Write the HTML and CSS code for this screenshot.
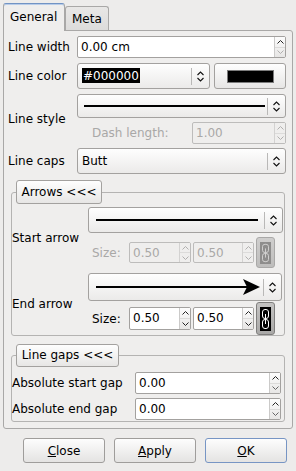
FILE: index.html
```html
<!DOCTYPE html>
<html lang="en">
<head>
	<meta charset="UTF-8">
	<title>Line properties</title>
<link rel="stylesheet" href="styles.css">
</head>
<body>
	<div class="tabs">
		<div class="tab tab-current">General</div>
		<div class="tab tab-meta">Meta</div>
	</div>

	<div class="pane">
		<div class="row">
			<span class="lbl">Line width</span>
			<div class="spin spin-wide">
				<span class="spin-text">0.00 cm</span>
				<span class="spin-btns">
					<span><svg width="7" height="4" viewBox="0 0 7 4"><path d="M0.5 3.5 3.5 0.5 6.5 3.5" fill="none" stroke="#222"/></svg></span>
					<span><svg width="7" height="4" viewBox="0 0 7 4"><path d="M0.5 0.5 3.5 3.5 6.5 0.5" fill="none" stroke="#b0afae"/></svg></span>
				</span>
			</div>
		</div>

		<div class="row row-color">
			<span class="lbl">Line color</span>
			<div class="combo combo-color">
				<span class="combo-text"><span class="selected">#000000</span></span>
				<span class="combo-arrow"><svg width="7" height="11" viewBox="0 0 7 11"><path d="M0.5 4 3.5 1 6.5 4 M0.5 7 3.5 10 6.5 7" fill="none" stroke="#111" stroke-width="1.1"/></svg></span>
			</div>
			<div class="colorbtn"><span class="swatch"></span></div>
		</div>

		<div class="row row-style">
			<span class="lbl">Line style</span>
			<div class="col">
				<div class="combo combo-style">
					<span class="combo-line line-style"></span>
					<span class="combo-arrow"><svg width="7" height="11" viewBox="0 0 7 11"><path d="M0.5 4 3.5 1 6.5 4 M0.5 7 3.5 10 6.5 7" fill="none" stroke="#111" stroke-width="1.1"/></svg></span>
				</div>
				<div class="dash-row">
					<span class="dash-lbl">Dash length:</span>
					<div class="spin spin-dash spin-off">
						<span class="spin-text">1.00</span>
						<span class="spin-btns">
							<span><svg width="7" height="4" viewBox="0 0 7 4"><path d="M0.5 3.5 3.5 0.5 6.5 3.5" fill="none" stroke="#b0afae"/></svg></span>
							<span><svg width="7" height="4" viewBox="0 0 7 4"><path d="M0.5 0.5 3.5 3.5 6.5 0.5" fill="none" stroke="#b0afae"/></svg></span>
						</span>
					</div>
				</div>
			</div>
		</div>

		<div class="row row-caps">
			<span class="lbl">Line caps</span>
			<div class="combo combo-caps">
				<span class="combo-text">Butt</span>
				<span class="combo-arrow"><svg width="7" height="11" viewBox="0 0 7 11"><path d="M0.5 4 3.5 1 6.5 4 M0.5 7 3.5 10 6.5 7" fill="none" stroke="#111" stroke-width="1.1"/></svg></span>
			</div>
		</div>

		<fieldset class="group group-arrows">
			<legend class="legend-btn legend-arrows"><span>Arrows &lt;&lt;&lt;</span></legend>

			<div class="row">
				<span class="lbl-arrow">Start arrow</span>
				<div class="col">
					<div class="combo combo-start">
						<span class="combo-line line-start"></span>
						<span class="combo-arrow"><svg width="7" height="11" viewBox="0 0 7 11"><path d="M0.5 4 3.5 1 6.5 4 M0.5 7 3.5 10 6.5 7" fill="none" stroke="#111" stroke-width="1.1"/></svg></span>
					</div>
					<div class="size-row size-start">
						<span class="size-lbl off">Size:</span>
						<div class="spin spin-size spin-off">
							<span class="spin-text">0.50</span>
							<span class="spin-btns">
								<span><svg width="7" height="4" viewBox="0 0 7 4"><path d="M0.5 3.5 3.5 0.5 6.5 3.5" fill="none" stroke="#b0afae"/></svg></span>
								<span><svg width="7" height="4" viewBox="0 0 7 4"><path d="M0.5 0.5 3.5 3.5 6.5 0.5" fill="none" stroke="#b0afae"/></svg></span>
							</span>
						</div>
						<div class="spin spin-size spin-off">
							<span class="spin-text">0.50</span>
							<span class="spin-btns">
								<span><svg width="7" height="4" viewBox="0 0 7 4"><path d="M0.5 3.5 3.5 0.5 6.5 3.5" fill="none" stroke="#b0afae"/></svg></span>
								<span><svg width="7" height="4" viewBox="0 0 7 4"><path d="M0.5 0.5 3.5 3.5 6.5 0.5" fill="none" stroke="#b0afae"/></svg></span>
							</span>
						</div>
						<div class="link link-off">
							<svg viewBox="0 0 11 24" preserveAspectRatio="none"><rect width="11" height="24" fill="#8e8d8c"/><rect x="2.5" y="2.5" width="6" height="9" rx="2.5" fill="none" stroke="#d2d1d0"/><rect x="2.5" y="12.5" width="6" height="9" rx="2.5" fill="none" stroke="#d2d1d0"/><path d="M5.5 7v10" stroke="#d2d1d0"/></svg>
						</div>
					</div>
				</div>
			</div>

			<div class="row row-end">
				<span class="lbl-arrow">End arrow</span>
				<div class="col">
					<div class="combo combo-end">
						<span class="combo-line line-end"></span>
						<svg class="head" width="17" height="16" viewBox="0 0 17 16"><path d="M0 0 17 8 0 16 4 8Z" fill="#000"/></svg>
						<span class="combo-arrow"><svg width="7" height="11" viewBox="0 0 7 11"><path d="M0.5 4 3.5 1 6.5 4 M0.5 7 3.5 10 6.5 7" fill="none" stroke="#111" stroke-width="1.1"/></svg></span>
					</div>
					<div class="size-row size-end">
						<span class="size-lbl">Size:</span>
						<div class="spin spin-size">
							<span class="spin-text">0.50</span>
							<span class="spin-btns">
								<span><svg width="7" height="4" viewBox="0 0 7 4"><path d="M0.5 3.5 3.5 0.5 6.5 3.5" fill="none" stroke="#222"/></svg></span>
								<span><svg width="7" height="4" viewBox="0 0 7 4"><path d="M0.5 0.5 3.5 3.5 6.5 0.5" fill="none" stroke="#222"/></svg></span>
							</span>
						</div>
						<div class="spin spin-size">
							<span class="spin-text">0.50</span>
							<span class="spin-btns">
								<span><svg width="7" height="4" viewBox="0 0 7 4"><path d="M0.5 3.5 3.5 0.5 6.5 3.5" fill="none" stroke="#222"/></svg></span>
								<span><svg width="7" height="4" viewBox="0 0 7 4"><path d="M0.5 0.5 3.5 3.5 6.5 0.5" fill="none" stroke="#222"/></svg></span>
							</span>
						</div>
						<div class="link">
							<svg viewBox="0 0 11 24" preserveAspectRatio="none"><rect width="11" height="24" fill="#000"/><rect x="2.5" y="2.5" width="6" height="9" rx="2.5" fill="none" stroke="#fff"/><rect x="2.5" y="12.5" width="6" height="9" rx="2.5" fill="none" stroke="#fff"/><path d="M5.5 7v10" stroke="#fff"/></svg>
						</div>
					</div>
				</div>
			</div>
		</fieldset>

		<fieldset class="group group-gaps">
			<legend class="legend-btn legend-gaps"><span>Line gaps &lt;&lt;&lt;</span></legend>

			<div class="row">
				<span class="lbl-gap">Absolute start gap</span>
				<div class="spin spin-gap">
					<span class="spin-text">0.00</span>
					<span class="spin-btns">
						<span><svg width="7" height="4" viewBox="0 0 7 4"><path d="M0.5 3.5 3.5 0.5 6.5 3.5" fill="none" stroke="#222"/></svg></span>
						<span><svg width="7" height="4" viewBox="0 0 7 4"><path d="M0.5 0.5 3.5 3.5 6.5 0.5" fill="none" stroke="#666"/></svg></span>
					</span>
				</div>
			</div>
			<div class="row row-gap2">
				<span class="lbl-gap">Absolute end gap</span>
				<div class="spin spin-gap">
					<span class="spin-text">0.00</span>
					<span class="spin-btns">
						<span><svg width="7" height="4" viewBox="0 0 7 4"><path d="M0.5 3.5 3.5 0.5 6.5 3.5" fill="none" stroke="#222"/></svg></span>
						<span><svg width="7" height="4" viewBox="0 0 7 4"><path d="M0.5 0.5 3.5 3.5 6.5 0.5" fill="none" stroke="#666"/></svg></span>
					</span>
				</div>
			</div>
		</fieldset>
	</div>

	<div class="actions">
		<button class="btn"><u>C</u>lose</button>
		<button class="btn"><u>A</u>pply</button>
		<button class="btn btn-default"><u>O</u>K</button>
	</div>
</body>
</html>
```

FILE: styles.css
```css
* {
    box-sizing: border-box;
}
body {
    margin: 0;
    width: 296px;
    height: 471px;
    overflow: hidden;
    background-color: #edeceb;
    font-family: "DejaVu Sans", Verdana, sans-serif;
    font-size: 12px;
    color: #000;
}

/* tabs */
.tabs {
    display: flex;
    align-items: flex-end;
    height: 27px;
    margin: 3px 0 0 3px;
}
.tab {
    height: 24px;
    padding: 0 6px;
    line-height: 24px;
    border: 1px solid #a9a8a7;
    border-bottom: none;
    border-radius: 3px 3px 0 0;
    background: linear-gradient(#e8e7e6, #dddcdb);
}
.tab-current {
    position: relative;
    width: 62px;
    height: 28px;
    margin-bottom: -1px;
    line-height: 27px;
    border-top-color: #7193c4;
    background: #efeeed;
    box-shadow: inset 0 1px #b8cce8;
}
.tab-meta {
    width: 44px;
}

.pane {
    width: 290px;
    padding: 5px 6px 6px 4px;
    margin-left: 3px;
    border: 1px solid #a9a8a7;
    border-radius: 0 3px 3px 3px;
    background: #efeeed;
}

/* rows */
.row {
    display: flex;
    align-items: center;
}
.row-color, .row-style {
    margin-top: 5px;
}
.row-caps {
    margin-top: 4px;
}
.lbl {
    flex: none;
    width: 69px;
}
.col {
    display: flex;
    flex-direction: column;
}

/* spin boxes */
.spin {
    display: flex;
    height: 22px;
    border: 1px solid #a3a19f;
    border-radius: 2px;
    background: #fff;
}
.spin-text {
    flex: 1;
    padding-left: 3px;
    line-height: 20px;
    white-space: nowrap;
}
.spin-btns {
    display: flex;
    flex-direction: column;
    width: 11px;
    border-left: 1px solid #cbcac9;
    background: linear-gradient(#fcfcfc, #e7e6e5);
}
.spin-btns span {
    flex: 1;
    display: flex;
    align-items: center;
    justify-content: center;
}
.spin-btns span + span {
    border-top: 1px solid #dcdbda;
}
.spin-btns svg {
    display: block;
}
.spin-off {
    border-color: #bdbcbb;
    background: #efeeed;
    color: #a9a8a7;
}
.spin-off .spin-btns {
    background: #efeeed;
    border-left-color: #d3d2d1;
}
.spin-wide {
    width: 209px;
}

/* combo boxes */
.combo {
    display: flex;
    align-items: center;
    height: 26px;
    border: 1px solid #a3a19f;
    border-radius: 3px;
    background: linear-gradient(#fefefe, #ebeae9);
}
.combo-text {
    flex: 1;
    padding-left: 4px;
}
.combo-arrow {
    flex: none;
    display: flex;
    align-items: center;
    justify-content: center;
    width: 18px;
    height: 17px;
    border-left: 1px solid #b9b8b7;
}
.combo-arrow svg {
    display: block;
}
.combo-line {
    flex: 1;
    height: 2px;
    background: #000;
}
.combo-color {
    width: 133px;
}
.selected {
    background: #000;
    color: #fff;
    padding: 1px 1px 0;
}
.combo-style {
    width: 209px;
    height: 24px;
}
.line-style {
    margin: 0 2px 0 6px;
}
.combo-caps {
    width: 209px;
}

.colorbtn {
    display: flex;
    align-items: center;
    justify-content: center;
    width: 72px;
    height: 26px;
    margin-left: 4px;
    border: 1px solid #a3a19f;
    border-radius: 3px;
    background: linear-gradient(#fefefe, #e7e6e5);
}
.swatch {
    width: 47px;
    height: 13px;
    background: #000;
    border: 1px solid #7c7c7c;
}

.dash-row {
    display: flex;
    align-items: center;
    margin-top: 4px;
}
.dash-lbl {
    flex: 1;
    padding-left: 15px;
    color: #a9a8a7;
}
.spin-dash {
    width: 94px;
}

/* group boxes */
.group {
    margin: 6px 1px 0 3px;
    padding: 3px 1px 0 0;
    border: 1px solid #b4b3b2;
    border-radius: 3px;
}
.legend-btn {
    height: 24px;
    margin-left: 4px;
    padding: 0;
    line-height: 22px;
    text-align: left;
    border: 1px solid #a3a19f;
    border-radius: 3px;
    background: linear-gradient(#fefefe, #e7e6e5);
}
.legend-btn span {
    display: block;
    text-align: center;
}
.legend-arrows {
    width: 86px;
}
.lbl-arrow {
    flex: none;
    width: 76px;
}
.combo-start {
    width: 195px;
}
.line-start {
    margin: 0 6px 0 7px;
}
.row-end {
    margin-top: 5px;
}
.combo-end {
    width: 194px;
    height: 28px;
}
.line-end {
    margin-left: 7px;
}
.head {
    flex: none;
    margin: 0 3px 0 -5px;
}

.size-row {
    display: flex;
    align-items: center;
}
.size-start {
    height: 31px;
    margin-top: 4px;
}
.size-end {
    height: 33px;
    margin-top: 1px;
}
.size-lbl {
    flex: none;
    width: 41px;
    padding-left: 4px;
}
.off {
    color: #a9a8a7;
}
.spin-size {
    width: 62px;
    height: 21px;
    margin-right: 2px;
}
.spin-size + .spin-size {
    width: 61px;
}
.size-end .spin-size {
    height: 23px;
}
.size-end .spin-size .spin-text {
    line-height: 21px;
}
.link {
    width: 19px;
    height: 100%;
    padding: 4px 3px 3px;
    border: 1px solid #7f7e7d;
    border-radius: 3px;
    background: linear-gradient(#c4c3c2, #a9a8a7);
}
.link svg {
    display: block;
    width: 100%;
    height: 100%;
}
.link-off {
    border-color: #a9a8a7;
    background: linear-gradient(#cfcecd, #bebdbc);
}

.group-gaps {
    margin-top: 8px;
    padding: 5px 1px 1px 0;
}
.legend-gaps {
    width: 103px;
    height: 23px;
    line-height: 21px;
}
.lbl-gap {
    flex: none;
    width: 123px;
}
.spin-gap {
    width: 146px;
}
.row-gap2 {
    margin-top: 4px;
}

/* dialog buttons */
.actions {
    display: flex;
    justify-content: flex-end;
    gap: 9px;
    margin-top: 9px;
    padding-right: 9px;
}
.btn {
    width: 82px;
    height: 25px;
    padding: 0;
    font-family: inherit;
    font-size: 12px;
    color: #000;
    border: 1px solid #9f9d9b;
    border-radius: 3px;
    background: linear-gradient(#fdfdfd, #e4e3e2);
}
.btn-default {
    border-color: #7795c4;
}
```
